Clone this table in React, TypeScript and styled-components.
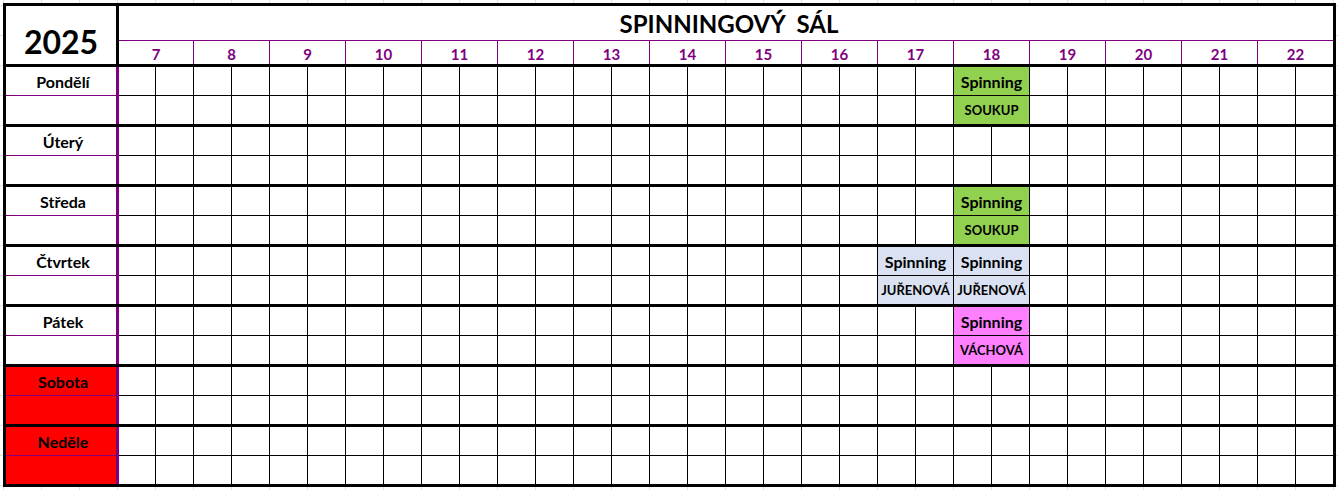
import styled, { createGlobalStyle } from "styled-components";

const GlobalStyle = createGlobalStyle`
  html, body {
    margin: 0;
    padding: 0;
  }
  body {
    background-color: #fff;
    background-image: linear-gradient(90deg, #e2e2e2 1px, transparent 1px),
      linear-gradient(#e2e2e2 1px, transparent 1px);
    background-size: 38px 30px;
    background-position: 3px 5px;
    font-family: Lato, "Open Sans", sans-serif;
    color: #000;
  }
`;

const PURPLE = "#800080";

const tones = {
  green: "#92d050",
  blue: "#d9e1f2",
  pink: "#ff80ff",
};

type Tone = keyof typeof tones;

type Booking = {
  day: number;
  hour: number;
  trainer: string;
  tone: Tone;
};

const hours = Array.from({ length: 16 }, (_, i) => i + 7);
const days = ["Pondělí", "Úterý", "Středa", "Čtvrtek", "Pátek", "Sobota", "Neděle"];

const bookings: Booking[] = [
  { day: 0, hour: 18, trainer: "SOUKUP", tone: "green" },
  { day: 2, hour: 18, trainer: "SOUKUP", tone: "green" },
  { day: 3, hour: 17, trainer: "JUŘENOVÁ", tone: "blue" },
  { day: 3, hour: 18, trainer: "JUŘENOVÁ", tone: "blue" },
  { day: 4, hour: 18, trainer: "VÁCHOVÁ", tone: "pink" },
];

const Sheet = styled.div`
  box-sizing: border-box;
  margin: 3px 0 0 3px;
  width: 1333px;
  border: 3px solid #000;
  background: #fff;
`;

const Header = styled.div`
  display: flex;
  height: 58px;
`;

const YearCell = styled.div`
  width: 110px;
  flex: none;
  border-right: 3px solid #000;
  display: flex;
  align-items: flex-end;
  justify-content: center;
  padding-bottom: 6px;
  font-size: 32px;
  font-weight: 700;
  line-height: 1;
`;

const HeaderRight = styled.div`
  width: 1214px;
  display: flex;
  flex-direction: column;
`;

const Title = styled.div`
  height: 34px;
  border-bottom: 1px solid ${PURPLE};
  display: flex;
  align-items: center;
  justify-content: center;
  font-size: 24px;
  font-weight: 700;
  white-space: pre;
  padding-left: 6px;
`;

const HourRow = styled.div`
  height: 23px;
  display: grid;
  grid-template-columns: 74px repeat(15, 75px);
  gap: 1px;
  background: ${PURPLE};
`;

const HourCell = styled.div`
  background: #fff;
  color: ${PURPLE};
  font-size: 15px;
  font-weight: 700;
  display: flex;
  align-items: center;
  justify-content: center;
  padding-top: 2px;
`;

const DayRow = styled.div`
  display: flex;
  border-top: 3px solid #000;
`;

const DayLabel = styled.div`
  width: 110px;
  flex: none;
  border-right: 3px solid ${PURPLE};
  display: grid;
  grid-template-rows: 28px 28px;
  gap: 1px;
  background: ${PURPLE};
`;

const LabelCell = styled.div<{ $weekend: boolean }>`
  background: ${(p) => (p.$weekend ? "#ff0000" : "#fff")};
  font-size: 16px;
  font-weight: 700;
  display: flex;
  align-items: center;
  justify-content: center;
  padding-left: 4px;
`;

const Slots = styled.div`
  display: grid;
  grid-template-columns: 36px repeat(31, 37px);
  grid-template-rows: 28px 28px;
  gap: 1px;
  background: #000;
`;

const Slot = styled.div`
  background: #fff;
`;

const BookingCell = styled.div<{ $tone: Tone; $small?: boolean }>`
  background: ${(p) => tones[p.$tone]};
  font-size: ${(p) => (p.$small ? "13px" : "16px")};
  font-weight: 700;
  display: flex;
  align-items: center;
  justify-content: center;
  white-space: nowrap;
`;

const DaySlots = ({ day }: { day: number }) => {
  const own = bookings.filter((b) => b.day === day);
  const taken = new Set(own.flatMap((b) => [(b.hour - 7) * 2 + 1, (b.hour - 7) * 2 + 2]));
  const cells = [];
  for (const row of [1, 2]) {
    for (let col = 1; col <= 32; col++) {
      if (taken.has(col)) continue;
      cells.push(<Slot key={`${row}-${col}`} style={{ gridRow: row, gridColumn: col }} />);
    }
  }
  return (
    <Slots>
      {cells}
      {own.map((b) => {
        const col = (b.hour - 7) * 2 + 1;
        return [
          <BookingCell key={`t${b.hour}`} $tone={b.tone} style={{ gridRow: 1, gridColumn: `${col} / span 2` }}>
            Spinning
          </BookingCell>,
          <BookingCell key={`n${b.hour}`} $tone={b.tone} $small style={{ gridRow: 2, gridColumn: `${col} / span 2` }}>
            {b.trainer}
          </BookingCell>,
        ];
      })}
    </Slots>
  );
};

const App = () => {
  return (
    <>
      <GlobalStyle />
      <Sheet>
        <Header>
          <YearCell>2025</YearCell>
          <HeaderRight>
            <Title>{"SPINNINGOVÝ  SÁL"}</Title>
            <HourRow>
              {hours.map((h) => (
                <HourCell key={h}>{h}</HourCell>
              ))}
            </HourRow>
          </HeaderRight>
        </Header>
        {days.map((name, i) => {
          const weekend = i >= 5;
          return (
            <DayRow key={name}>
              <DayLabel>
                <LabelCell $weekend={weekend}>{name}</LabelCell>
                <LabelCell $weekend={weekend} />
              </DayLabel>
              <DaySlots day={i} />
            </DayRow>
          );
        })}
      </Sheet>
    </>
  );
};

export default App;
